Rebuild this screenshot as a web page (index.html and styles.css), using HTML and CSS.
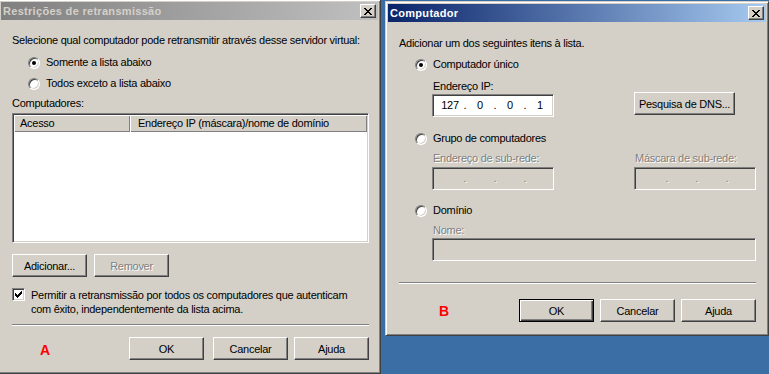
FILE: index.html
```html
<!DOCTYPE html>
<html lang="pt">

<head>
    <meta charset="UTF-8">
    <meta name="viewport" content="width=device-width, initial-scale=1.0">
    <title>Restrições de retransmissão</title>
    <link rel="stylesheet" href="styles.css">
</head>

<body>
    <div class="desk">

        <!-- left dialog, inactive -->
        <div class="dialog dlg-relay">
            <div class="titlebar inactive">
                <span class="title">Restrições de retransmissão</span>
                <span class="close-btn">
                    <svg width="8" height="7" viewBox="0 0 8 7" shape-rendering="crispEdges">
                        <path d="M0 0h2v1H0zM6 0h2v1H6zM1 1h2v1H1zM5 1h2v1H5zM2 2h4v1H2zM3 3h2v1H3zM2 4h4v1H2zM1 5h2v1H1zM5 5h2v1H5zM0 6h2v1H0zM6 6h2v1H6z" fill="#000" />
                    </svg>
                </span>
            </div>
            <div class="dlg-body">
                <p class="txt intro">Selecione qual computador pode retransmitir através desse servidor virtual:</p>
                <div class="radio-list">
                    <div class="opt"><span class="radio on"></span>Somente a lista abaixo</div>
                    <div class="opt"><span class="radio"></span>Todos exceto a lista abaixo</div>
                </div>
                <p class="txt list-label">Computadores:</p>
                <div class="listview">
                    <div class="lv-head">
                        <span class="col col-access">Acesso</span>
                        <span class="col col-ip">Endereço IP (máscara)/nome de domínio</span>
                    </div>
                </div>
                <div class="btn-row">
                    <button class="btn">Adicionar...</button>
                    <button class="btn" disabled>Remover</button>
                </div>
                <div class="check-row">
                    <span class="checkbox">
                        <svg width="7" height="7" viewBox="0 0 7 7" shape-rendering="crispEdges">
                            <path d="M6 0h1v1H6zM5 1h2v1H5zM0 2h1v1H0zM4 2h3v1H4zM0 3h2v1H0zM3 3h3v1H3zM0 4h5v1H0zM1 5h3v1H1zM2 6h1v1H2z" fill="#000" />
                        </svg>
                    </span>
                    <span class="check-text">Permitir a retransmissão por todos os computadores que autenticam<br>com êxito, independentemente da lista acima.</span>
                </div>
                <hr class="sep">
                <div class="footer">
                    <span class="mark">A</span>
                    <button class="btn btn-ok">OK</button>
                    <button class="btn">Cancelar</button>
                    <button class="btn">Ajuda</button>
                </div>
            </div>
        </div>

        <!-- right dialog, active -->
        <div class="dialog dlg-computer">
            <div class="titlebar active">
                <span class="title">Computador</span>
                <span class="close-btn">
                    <svg width="8" height="7" viewBox="0 0 8 7" shape-rendering="crispEdges">
                        <path d="M0 0h2v1H0zM6 0h2v1H6zM1 1h2v1H1zM5 1h2v1H5zM2 2h4v1H2zM3 3h2v1H3zM2 4h4v1H2zM1 5h2v1H1zM5 5h2v1H5zM0 6h2v1H0zM6 6h2v1H6z" fill="#000" />
                    </svg>
                </span>
            </div>
            <div class="dlg-body">
                <p class="txt intro">Adicionar um dos seguintes itens à lista.</p>

                <div class="opt opt-single"><span class="radio on"></span>Computador único</div>
                <div class="indent">
                    <div class="pair">
                        <span class="txt field-label">Endereço IP:</span>
                        <span></span>
                        <div class="field ip">
                            <span class="octet">127</span><span class="dot">.</span>
                            <span class="octet">0</span><span class="dot">.</span>
                            <span class="octet">0</span><span class="dot">.</span>
                            <span class="octet">1</span>
                        </div>
                        <div><button class="btn btn-dns">Pesquisa de DNS...</button></div>
                    </div>
                </div>

                <div class="opt opt-group"><span class="radio"></span>Grupo de computadores</div>
                <div class="indent">
                    <div class="pair">
                        <span class="txt field-label off">Endereço de sub-rede:</span>
                        <span class="txt field-label off">Máscara de sub-rede:</span>
                        <div class="field ip off">
                            <span class="octet"></span><span class="dot">.</span>
                            <span class="octet"></span><span class="dot">.</span>
                            <span class="octet"></span><span class="dot">.</span>
                            <span class="octet"></span>
                        </div>
                        <div class="field ip off">
                            <span class="octet"></span><span class="dot">.</span>
                            <span class="octet"></span><span class="dot">.</span>
                            <span class="octet"></span><span class="dot">.</span>
                            <span class="octet"></span>
                        </div>
                    </div>
                </div>

                <div class="opt opt-domain"><span class="radio"></span>Domínio</div>
                <div class="indent">
                    <span class="txt field-label off">Nome:</span>
                    <div class="field wide off"></div>
                </div>

                <hr class="sep">
                <div class="footer">
                    <span class="mark">B</span>
                    <button class="btn btn-default">OK</button>
                    <button class="btn">Cancelar</button>
                    <button class="btn">Ajuda</button>
                </div>
            </div>
        </div>

    </div>
</body>

</html>
```

FILE: styles.css
```css
* {
    box-sizing: border-box;
}

body {
    margin: 0;
    background-color: #3a6ea5;
    font-family: "Liberation Sans", Arial, sans-serif;
    font-size: 11px;
    letter-spacing: -0.27px;
    color: #000;
    overflow: hidden;
}

.desk {
    display: flex;
    align-items: flex-start;
    gap: 4px;
    height: 374px;
}

/* classic window frame */
.dialog {
    background-color: #d4d0c8;
    border: 1px solid;
    border-color: #d4d0c8 #404040 #404040 #d4d0c8;
    box-shadow: inset 1px 1px #fff, inset -1px -1px #808080;
    padding: 2px;
}

.dlg-relay {
    width: 383px;
    height: 375px;
    margin-left: -2px;
    margin-top: -1px;
}

.dlg-computer {
    width: 384px;
    height: 335px;
    margin-top: 1px;
}

.titlebar {
    height: 18px;
    display: flex;
    align-items: center;
    justify-content: space-between;
    padding: 0 2px;
}

.titlebar .title {
    font-weight: bold;
    letter-spacing: 0.3px;
    color: #fff;
}

.titlebar.inactive {
    background: linear-gradient(to right, #808080, #c0c0c0);
}

.titlebar.inactive .title {
    color: #d4d0c8;
}

.titlebar.active {
    background: linear-gradient(to right, #0a246a, #a6caf0);
}

.close-btn {
    width: 16px;
    height: 14px;
    background-color: #d4d0c8;
    border: 1px solid;
    border-color: #fff #404040 #404040 #fff;
    box-shadow: inset -1px -1px #808080;
    display: flex;
    align-items: center;
    justify-content: center;
}

.close-btn svg {
    display: block;
}

.dlg-body {
    padding: 0 10px 0 11px;
}

.dlg-relay .dlg-body {
    padding-right: 9px;
}

.txt {
    margin: 0;
    line-height: 13px;
    white-space: nowrap;
}

.off {
    color: #808080;
    text-shadow: 1px 1px #fff;
}

/* radio buttons */
.opt {
    display: flex;
    align-items: center;
    height: 13px;
    line-height: 13px;
    padding-left: 16px;
    white-space: nowrap;
}

.radio {
    width: 12px;
    height: 12px;
    border-radius: 50%;
    background-color: #fff;
    border: 1px solid;
    border-color: #808080 #fff #fff #808080;
    box-shadow: inset 1px 1px #404040, inset -1px -1px #d4d0c8;
    margin-right: 6px;
    position: relative;
    flex: none;
}

.radio.on::after {
    content: "";
    position: absolute;
    left: 3px;
    top: 3px;
    width: 4px;
    height: 4px;
    border-radius: 50%;
    background-color: #000;
}

/* left dialog */
.dlg-relay .intro {
    margin-top: 14px;
}

.radio-list {
    margin-top: 9px;
    display: flex;
    flex-direction: column;
    gap: 8px;
}

.list-label {
    margin-top: 7px;
}

.listview {
    margin-top: 3px;
    height: 130px;
    background-color: #fff;
    border: 1px solid;
    border-color: #808080 #fff #fff #808080;
    box-shadow: inset 1px 1px #404040, inset -1px -1px #d4d0c8;
    padding: 1px;
}

.lv-head {
    display: flex;
    height: 17px;
}

.lv-head .col {
    background-color: #d4d0c8;
    box-shadow: inset 1px 1px #fff, inset -1px -1px #808080;
    line-height: 17px;
    padding-left: 6px;
    white-space: nowrap;
}

.col-access {
    width: 116px;
}

.col-ip {
    flex: 1;
    padding-left: 8px !important;
}

.btn {
    width: 75px;
    height: 23px;
    padding: 0;
    font-family: inherit;
    font-size: 11px;
    letter-spacing: inherit;
    color: #000;
    background-color: #d4d0c8;
    border: 1px solid;
    border-color: #fff #404040 #404040 #fff;
    box-shadow: inset -1px -1px #808080;
    border-radius: 0;
}

.btn:disabled {
    color: #808080;
    text-shadow: 1px 1px #fff;
}

.btn-default {
    border-color: #000;
    box-shadow: inset 1px 1px #fff, inset -1px -1px #404040, inset -2px -2px #808080;
}

.btn-row {
    margin-top: 11px;
    display: flex;
    gap: 7px;
}

.check-row {
    margin-top: 11px;
    display: flex;
    align-items: flex-start;
}

.checkbox {
    width: 13px;
    height: 13px;
    flex: none;
    background-color: #fff;
    border: 1px solid;
    border-color: #808080 #fff #fff #808080;
    box-shadow: inset 1px 1px #404040, inset -1px -1px #d4d0c8;
    padding: 2px 0 0 2px;
    margin-right: 6px;
}

.checkbox svg {
    display: block;
}

.check-text {
    line-height: 14px;
    white-space: nowrap;
}

.sep {
    margin: 8px 0 0;
    height: 2px;
    border: none;
    border-top: 1px solid #808080;
    border-bottom: 1px solid #fff;
}

.footer {
    margin-top: 11px;
    display: flex;
    align-items: center;
    gap: 6px;
}

.dlg-relay .btn-ok {
    margin-right: 3px;
}

.mark {
    margin-right: auto;
    margin-left: 28px;
    color: #f00;
    font-weight: bold;
    font-size: 14px;
    line-height: 14px;
    letter-spacing: 0;
    padding-top: 3px;
}

/* right dialog */
.dlg-computer .intro {
    margin-top: 15px;
}

.opt-single {
    margin-top: 8px;
}

.opt-group {
    margin-top: 15px;
}

.opt-domain {
    margin-top: 14px;
}

.indent {
    padding-left: 33px;
}

.field-label {
    display: block;
    padding-left: 1px;
}

.opt-single + .indent .field-label {
    margin-top: 9px;
}

.opt-group + .indent .field-label {
    margin-top: 7px;
}

.opt-domain + .indent .field-label {
    margin-top: 7px;
}

.pair {
    display: grid;
    grid-template-columns: 122px 122px;
    justify-content: space-between;
    align-items: start;
}

.field {
    height: 23px;
    background-color: #fff;
    border: 1px solid;
    border-color: #808080 #fff #fff #808080;
    box-shadow: inset 1px 1px #404040, inset -1px -1px #d4d0c8;
}

.field.off {
    background-color: #d4d0c8;
}

.field.ip {
    display: flex;
    align-items: center;
    padding-left: 5px;
    line-height: 13px;
}

.opt-single + .indent .field {
    margin-top: 1px;
}

.opt-group + .indent .field {
    margin-top: 2px;
}

.field.wide {
    margin-top: 1px;
}

.octet {
    width: 24px;
    text-align: center;
}

.dot {
    width: 6px;
    text-align: center;
}

.btn-dns {
    width: 101px;
    margin-top: -1px;
}

.dlg-computer .sep {
    margin-top: 21px;
}

.dlg-computer .footer {
    margin-top: 15px;
}

.dlg-computer .mark {
    margin-left: 40px;
    padding-top: 0;
}
```
